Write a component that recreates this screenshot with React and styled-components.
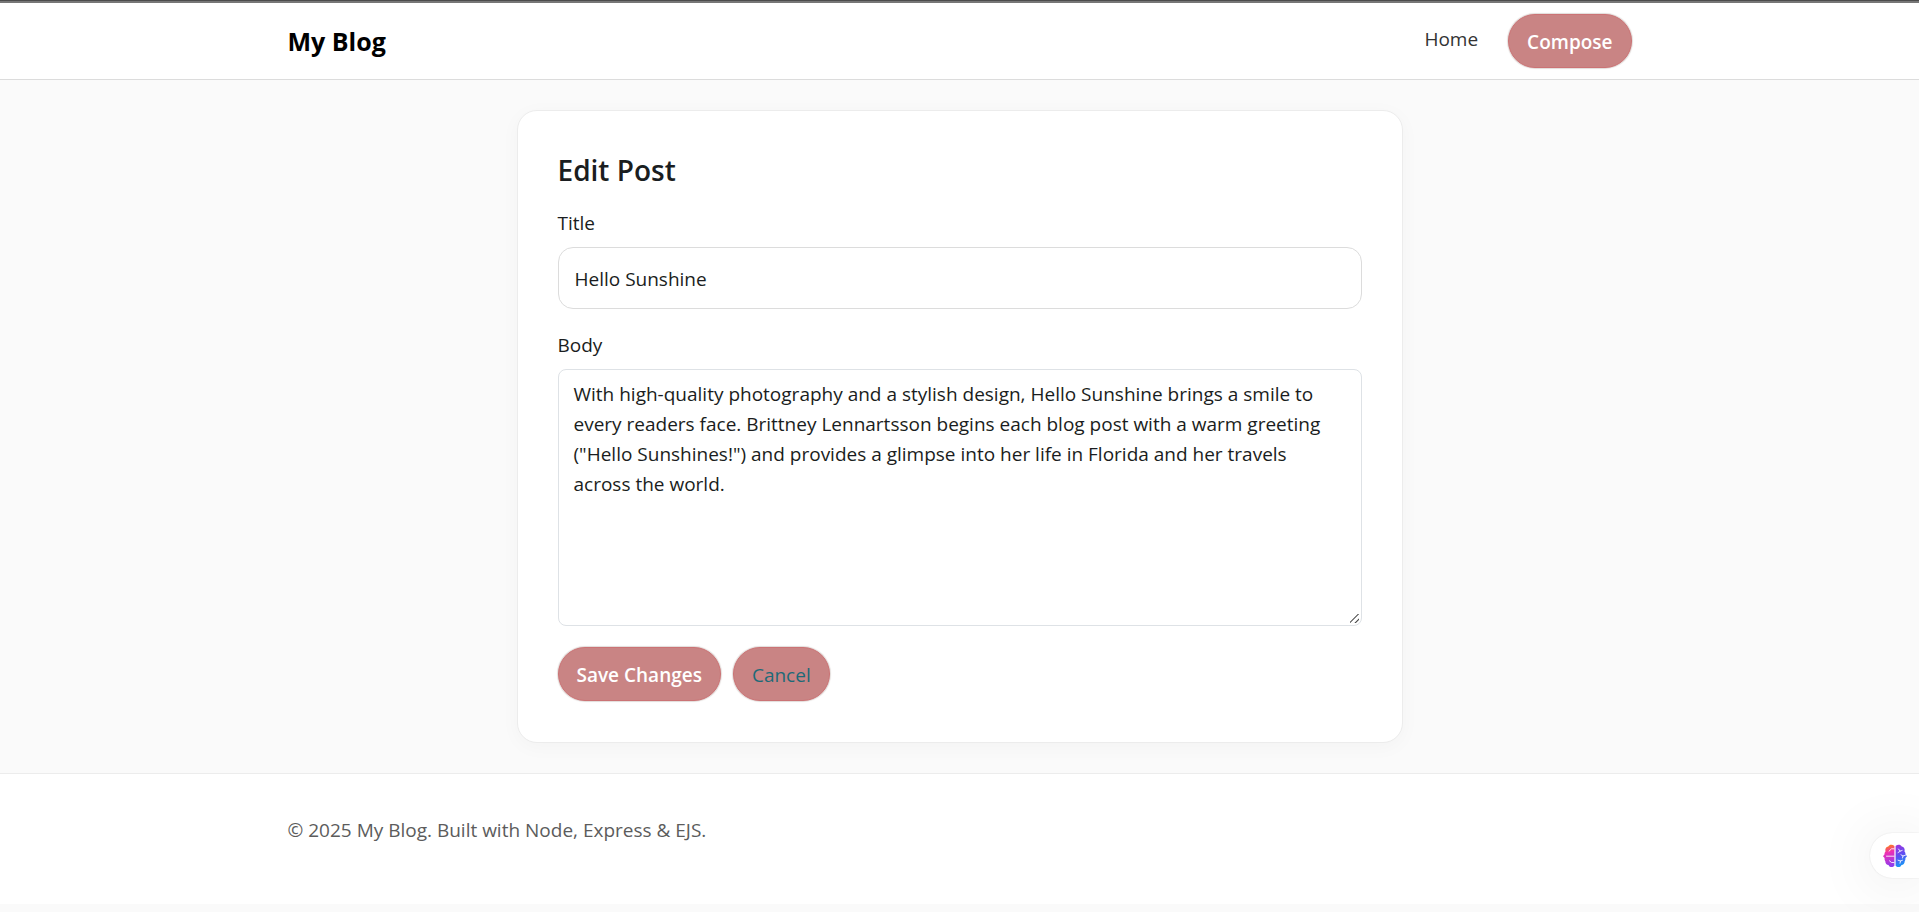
import React, { useState } from "react";
import styled, { createGlobalStyle } from "styled-components";

const GlobalStyle = createGlobalStyle`
  *, *::before, *::after { box-sizing: border-box; }
  html { background: #fafafa; }
  body {
    margin: 0;
    background: #fafafa;
    color: #1a1d20;
    font-family: "Segoe UI", "Open Sans", "Noto Sans", sans-serif;
    font-size: 19px;
    line-height: 30px;
    overflow-x: hidden;
  }
`;

const Header = styled.header`
  background: #fff;
  border-bottom: 1px solid #dcdcdc;

  &::before {
    content: "";
    display: block;
    height: 3px;
    border-top: 1px solid #4c4c4c;
    background: #777;
  }
`;

const Container = styled.div`
  width: 100%;
  max-width: 1344px;
  margin: 0 auto;
`;

const NavBar = styled(Container)`
  display: flex;
  align-items: center;
  justify-content: space-between;
  padding: 11px 0;
`;

const Brand = styled.a`
  color: #000;
  font-size: 25px;
  font-weight: 700;
  text-decoration: none;
`;

const Nav = styled.nav`
  display: flex;
  align-items: flex-start;
  gap: 30px;
`;

const NavLink = styled.a`
  color: #333;
  padding-top: 10px;
  text-decoration: none;
`;

const Button = styled.button`
  display: inline-block;
  padding: 12px 18px 10px;
  border: 1px solid #cb7375;
  border-radius: 27px;
  background: #c98484;
  box-shadow: 0 0 1px 1px #e2dcda;
  color: ${(p) => (p.$tone === "teal" ? "#1d6a78" : "#fff")};
  font: inherit;
  font-weight: ${(p) => (p.$tone === "teal" ? 500 : 600)};
  text-decoration: none;
  cursor: pointer;
`;

const Main = styled.main`
  padding: 30px 0;
`;

const Card = styled.section`
  width: 100%;
  max-width: 886px;
  margin: 0 auto;
  padding: 41px 40px;
  border: 1px solid #ececec;
  border-radius: 20px;
  background: #fff;
  box-shadow: 0 4px 20px rgba(0, 0, 0, 0.03);
`;

const Heading = styled.h1`
  margin: 0 0 20px;
  font-size: 28px;
  font-weight: 600;
  line-height: 36px;
`;

const Field = styled.div`
  display: flex;
  flex-direction: column;
  gap: 9px;
  margin-bottom: 21px;
`;

const TextInput = styled.input`
  width: 100%;
  height: 62px;
  padding: 2px 16px 0;
  border: 1px solid #dcdcdc;
  border-radius: 15px;
  background: #fff;
  color: inherit;
  font: inherit;
`;

const TextArea = styled.textarea`
  display: block;
  width: 100%;
  height: 257px;
  padding: 9px 15px;
  border: 1px solid #dee2e6;
  border-radius: 8px;
  background: #fff;
  color: inherit;
  font: inherit;
  resize: vertical;

  &::-webkit-resizer {
    background: linear-gradient(
        135deg,
        transparent 5px,
        #3c3c3c 6px,
        transparent 7px,
        transparent 9px,
        #3c3c3c 10px,
        transparent 11px
      )
      4px 4px / 9px 9px no-repeat;
  }
`;

const Actions = styled.div`
  display: flex;
  gap: 12px;
`;

const Footer = styled.footer`
  padding: 41px 0 59px;
  border-top: 1px solid #ececec;
  background: #fff;
  color: #5c5c5c;
`;

const Assistant = styled.button`
  position: fixed;
  right: 0;
  bottom: 34px;
  display: flex;
  align-items: center;
  width: 49px;
  height: 45px;
  padding: 0 0 0 12px;
  border: 0;
  border-radius: 23px 0 0 23px;
  background: #fff;
  box-shadow: 0 0 2px rgba(0, 0, 0, 0.12), 0 4px 60px rgba(0, 0, 0, 0.1);
  cursor: pointer;
`;

function BrainIcon() {
  return (
    <svg width="26" height="24" viewBox="0 0 26 24" fill="none" aria-hidden="true">
      <defs>
        <linearGradient id="brainLeft" x1="4" y1="1" x2="11" y2="22" gradientUnits="userSpaceOnUse">
          <stop offset="0" stopColor="#ff8a00" />
          <stop offset="0.35" stopColor="#ee2fb4" />
          <stop offset="1" stopColor="#8a3df0" />
        </linearGradient>
        <linearGradient id="brainRight" x1="14" y1="2" x2="23" y2="21" gradientUnits="userSpaceOnUse">
          <stop offset="0" stopColor="#9a35df" />
          <stop offset="0.5" stopColor="#5b50f2" />
          <stop offset="1" stopColor="#139df5" />
        </linearGradient>
      </defs>
      <path d="M12.400 2C10.500.200 7.300.500 6.300 2.400 3.900 2.700 2.800 5.100 3.500 7.400 2.600 8.600 2.400 9.500 2.600 10.300L1 12.200 2.600 14C2.400 15.300 2.700 16.500 3.300 17.200 3.300 19.400 4.700 20.900 6.500 20.900 7.600 23.600 10.800 23.700 12.400 21.800Z" fill="url(#brainLeft)" />
      <path d="M13.600 2C15.500.200 18.700.500 19.700 2.400 22.100 2.700 23.200 5.100 22.500 7.400 23.400 8.600 23.600 9.500 23.400 10.300L25 12.200 23.400 14C23.600 15.300 23.300 16.500 22.700 17.200 22.700 19.400 21.300 20.900 19.500 20.900 18.400 23.600 15.200 23.700 13.600 21.800Z" fill="url(#brainRight)" />
      <g stroke="#fff" strokeOpacity="0.850" strokeLinecap="round">
        <path d="M12 4.800H9.500L7 7.200M12 12.200H4.500M12 18.500H9.500L7.500 16.800" />
        <path d="M16.500 5l1.700 2.200 2-.8M18.200 7.200 16 8.600M19 10.800l2 1.200 2.500-.8M21 12l-.5 2M16 16.200l2.500.800 2-.8M18.500 17l-.5 2.200" />
      </g>
    </svg>
  );
}

const POST = {
  title: "Hello Sunshine",
  body:
    'With high-quality photography and a stylish design, Hello Sunshine brings a smile to every readers face. Brittney Lennartsson begins each blog post with a warm greeting ("Hello Sunshines!") and provides a glimpse into her life in Florida and her travels across the world.',
};

export default function App() {
  const [title, setTitle] = useState(POST.title);
  const [body, setBody] = useState(POST.body);

  return (
    <>
      <GlobalStyle />
      <Header>
        <NavBar>
          <Brand href="#">My Blog</Brand>
          <Nav>
            <NavLink href="#">Home</NavLink>
            <Button as="a" href="#compose">Compose</Button>
          </Nav>
        </NavBar>
      </Header>
      <Main>
        <Card>
          <Heading>Edit Post</Heading>
          <form onSubmit={(e) => e.preventDefault()}>
            <Field>
              <label htmlFor="title">Title</label>
              <TextInput id="title" type="text" value={title} onChange={(e) => setTitle(e.target.value)} />
            </Field>
            <Field>
              <label htmlFor="body">Body</label>
              <TextArea id="body" value={body} spellCheck={false} onChange={(e) => setBody(e.target.value)} />
            </Field>
            <Actions>
              <Button type="submit">Save Changes</Button>
              <Button as="a" href="#" $tone="teal">Cancel</Button>
            </Actions>
          </form>
        </Card>
      </Main>
      <Footer>
        <Container>© 2025 My Blog. Built with Node, Express &amp; EJS.</Container>
      </Footer>
      <Assistant type="button" aria-label="Open assistant">
        <BrainIcon />
      </Assistant>
    </>
  );
}
